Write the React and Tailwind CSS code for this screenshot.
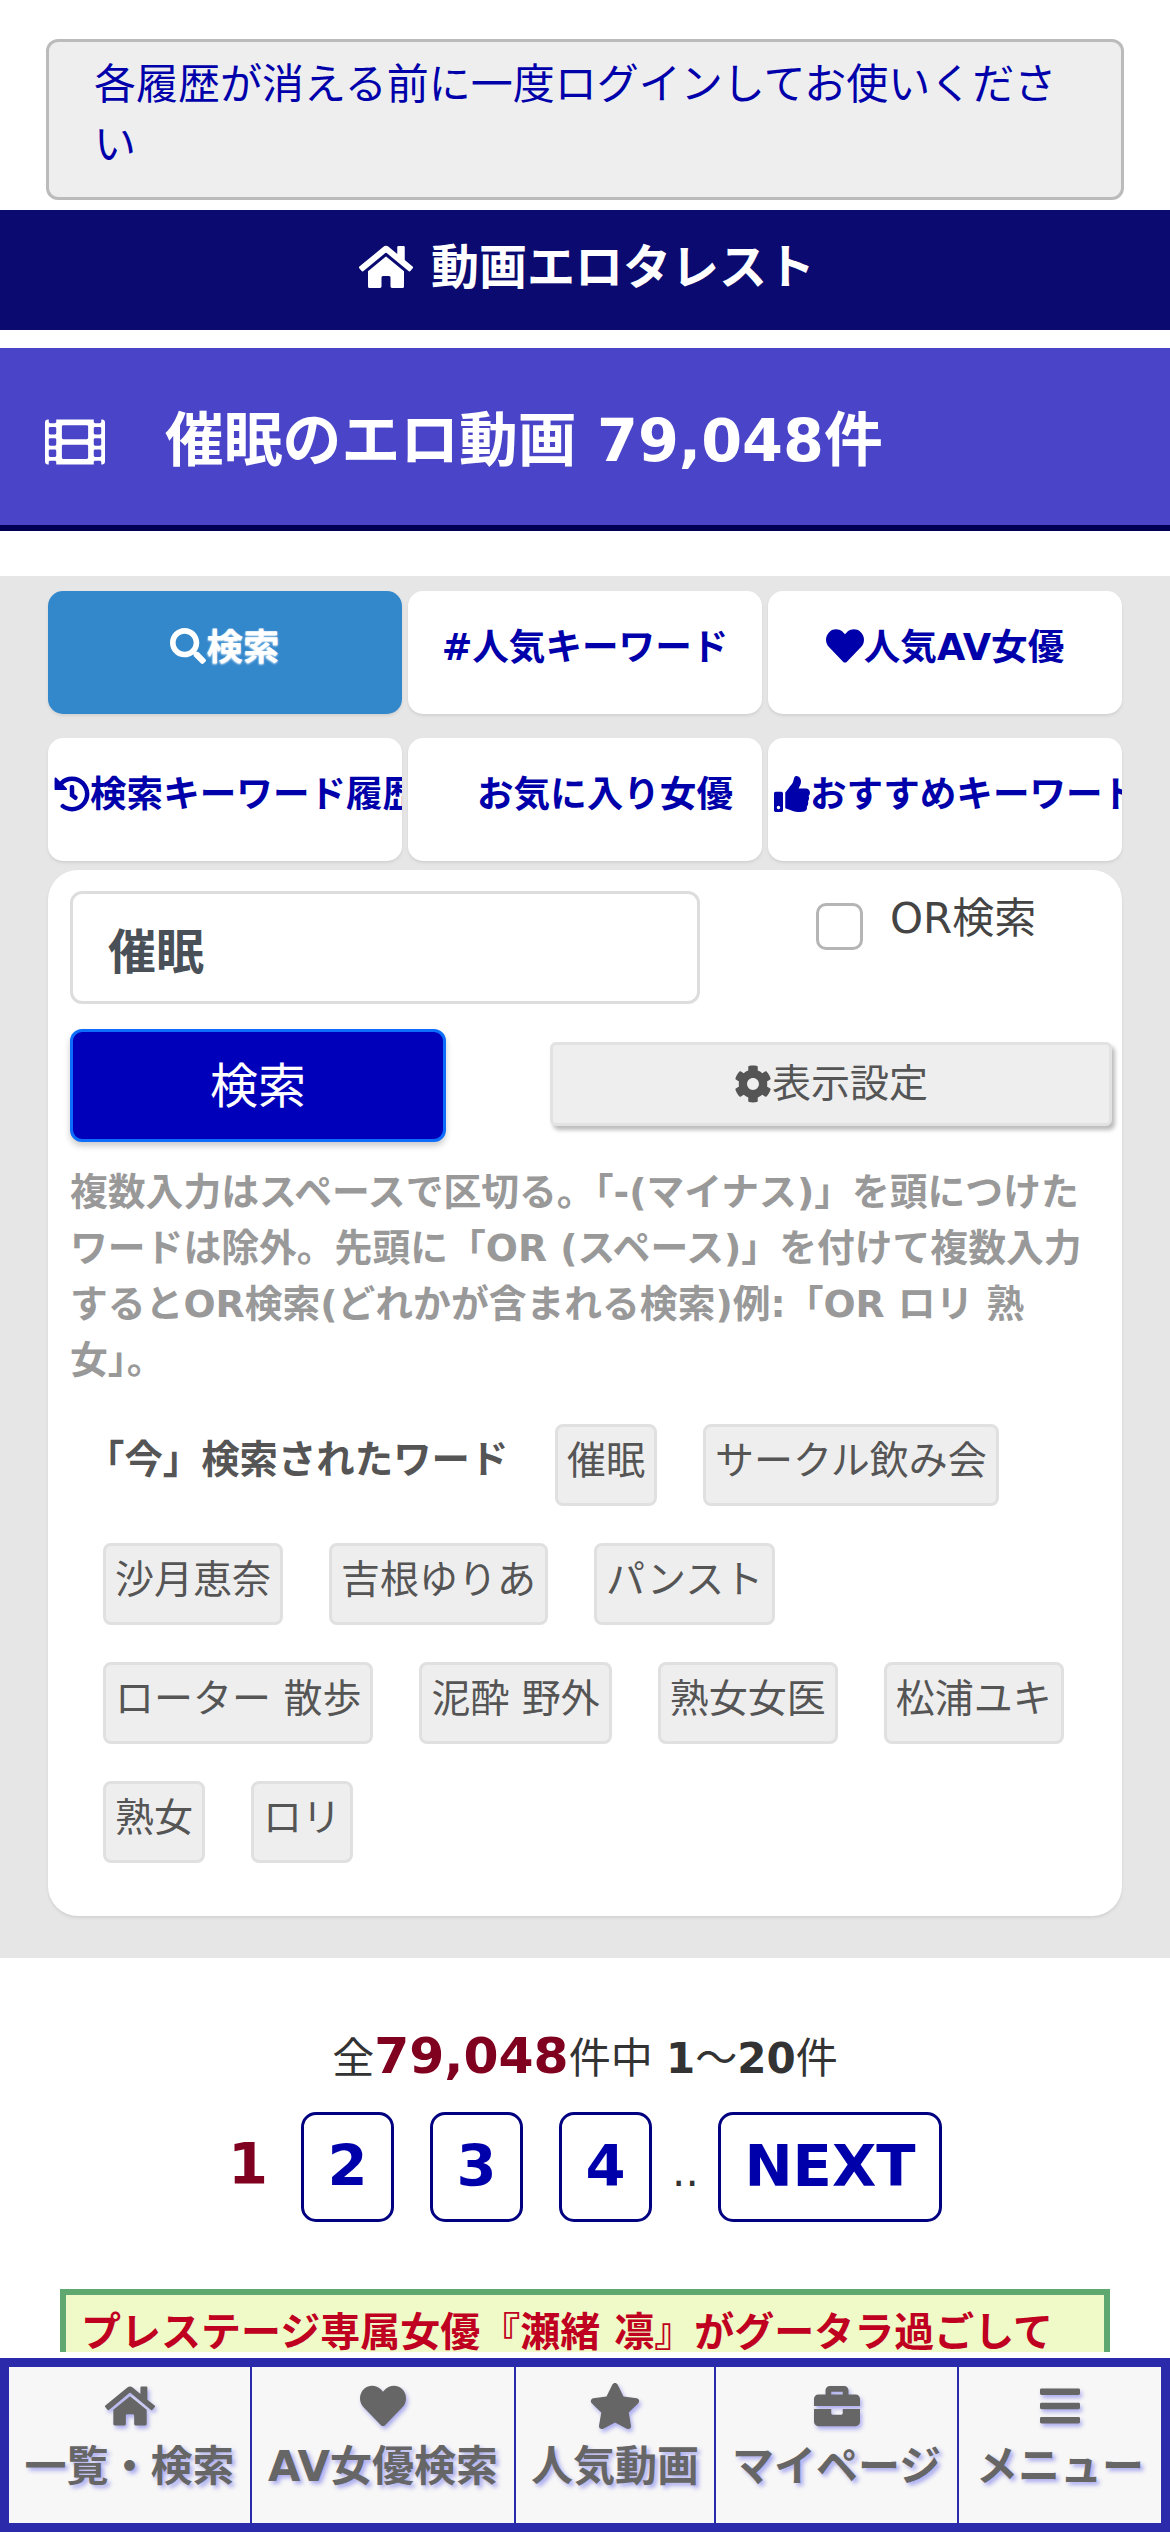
import React from 'react'
import { FaHome, FaFilm, FaSearch, FaHeart, FaHistory, FaThumbsUp, FaCog, FaStar, FaBriefcase, FaBars } from 'react-icons/fa'

const TABS = [
	{ label: '検索', icon: <FaSearch className="inline w-[36px] h-[36px] align-[-4px]" />, active: true },
	{ label: '#人気キーワード' },
	{ label: '人気AV女優', icon: <FaHeart className="inline w-[38px] h-[38px] align-[-5px]" /> },
	{ label: '検索キーワード履歴', icon: <FaHistory className="inline w-[36px] h-[36px] align-[-5px]" /> },
	{ label: 'お気に入り女優', icon: <span className="inline-block w-[40px]" /> },
	{ label: 'おすすめキーワード', icon: <FaThumbsUp className="inline w-[36px] h-[36px] align-[-5px]" /> },
]

const WORDS = ['催眠', 'サークル飲み会', '沙月恵奈', '吉根ゆりあ', 'パンスト', 'ローター 散歩', '泥酔 野外', '熟女女医', '松浦ユキ', '熟女', 'ロリ']

const NAV = [
	{ label: '一覧・検索', icon: <FaHome className="w-[50px] h-[50px]" />, w: 'w-[241px]' },
	{ label: 'AV女優検索', icon: <FaHeart className="w-[46px] h-[46px]" />, w: 'w-[262px]' },
	{ label: '人気動画', icon: <FaStar className="w-[52px] h-[52px]" />, w: 'w-[198px]' },
	{ label: 'マイページ', icon: <FaBriefcase className="w-[46px] h-[46px]" />, w: 'w-[241px]' },
	{ label: 'メニュー', icon: <FaBars className="w-[40px] h-[46px]" />, w: 'flex-1' },
]

const App = () => {
	return (
		<div className="h-[2532px] overflow-hidden bg-white font-['DejaVu_Sans','Noto_Sans_CJK_JP',sans-serif] flex flex-col">
			<div className="h-[2352px] overflow-hidden">

				{/* ALERT */}
				<div className="mt-[39px] mx-[46px] h-[161px] border-[3px] border-[#bbbbbb] rounded-[12px] bg-[#eeeeee] px-[45px] pt-[13px] text-[42px] leading-[60px] text-[#0000aa]">
					各履歴が消える前に一度ログインしてお使いください
				</div>

				{/* SITE HEADER */}
				<div className="mt-[10px] h-[120px] bg-[#0a0a70] pb-[6px] pl-[4px] flex items-center justify-center gap-[18px] text-white text-[48px] font-bold">
					<FaHome className="w-[54px] h-[48px]" />
					<span>動画エロタレスト</span>
				</div>

				{/* TITLE */}
				<div className="mt-[18px] h-[183px] bg-[#4a44c8] border-b-[6px] border-[#000055] pt-[10px] flex items-center pl-[45px] text-white">
					<FaFilm className="w-[60px] h-[60px] shrink-0" />
					<h1 className="ml-[60px] text-[58.8px] font-bold">催眠のエロ動画 79,048件</h1>
				</div>

				{/* SEARCH AREA */}
				<div className="mt-[45px] h-[1382px] bg-[#e6e6e6] px-[48px] pt-[15px]">
					<div className="grid grid-cols-3 gap-x-[6px] gap-y-[24px]">
						{TABS.map(tab => (
							<div
								key={tab.label}
								className={`h-[123px] rounded-[15px] px-[6px] pt-[33px] text-center whitespace-nowrap overflow-hidden text-[36.6px] leading-[48px] font-bold shadow-[0_2px_3px_#d2d2d2] ${tab.active
									? 'bg-[#3388cc] text-white [text-shadow:0_1px_2px_#ffffff]'
									: 'bg-white text-[#0000aa]'
									}`}
							>
								{tab.icon}{tab.label}
							</div>
						))}
					</div>

					<div className="mt-[9px] h-[1046px] bg-white rounded-[30px] px-[22px] pt-[21px] shadow-[0_2px_3px_#d2d2d2]">
						<div className="flex">
							<input
								readOnly
								value="催眠"
								className="w-[630px] h-[113px] shrink-0 border-[3px] border-[#dddddd] rounded-[12px] px-[35px] text-[48px] font-bold text-[#495057] outline-none"
							/>
							<div className="ml-[116px] mt-[12px] w-[47px] h-[47px] shrink-0 border-[3px] border-[#b5b5b5] rounded-[10px]" />
							<span className="ml-[27px] text-[42px] leading-[50px] text-[#444444] h-fit mt-[3px] whitespace-nowrap">OR検索</span>
						</div>

						<div className="mt-[25px] flex items-start">
							<div className="w-[376px] h-[113px] shrink-0 bg-[#0000bb] border-[3px] border-[#0d6efd] rounded-[12px] flex items-center justify-center text-white text-[48px] shadow-[0_4px_6px_#cccccc]">
								検索
							</div>
							<div className="ml-[104px] mt-[13px] w-[562px] h-[84px] shrink-0 bg-[#eeeeee] border-[3px] border-[#e2e2e2] rounded-[6px] flex items-center justify-center text-[39px] text-[#555555] shadow-[3px_4px_4px_#bbbbbb]">
								<FaCog className="w-[38px] h-[38px] text-[#555555]" />
								<span>表示設定</span>
							</div>
						</div>

						<p className="mt-[22px] text-[37.8px] leading-[56px] font-bold text-[#999999]">
							複数入力はスペースで区切る。「-(マイナス)」を頭につけたワードは除外。先頭に「OR (スペース)」を付けて複数入力するとOR検索(どれかが含まれる検索)例:「OR ロリ 熟女」。
						</p>

						<div className="mt-[36px] pl-[33px] pr-[30px] flex flex-wrap gap-x-[46px] gap-y-[37px] items-start">
							<span className="-ml-[17px] w-[423px] h-[82px] text-[38.4px] leading-[72px] font-bold text-[#555555] whitespace-nowrap">「今」検索されたワード</span>
							{WORDS.map(word => (
								<span
									key={word}
									className="h-[82px] px-[9px] border-[3px] border-[#e0e0e0] rounded-[8px] bg-[#eeeeee] text-[39px] leading-[68px] text-[#555555] whitespace-nowrap"
								>
									{word}
								</span>
							))}
						</div>
					</div>
				</div>

				{/* PAGER */}
				<div className="mt-[66px] text-center text-[42px] leading-[63px] text-[#333333]">
					全<b className="text-[50.4px] text-[#800020]">79,048</b>件中 <b>1</b>〜<b>20</b>件
				</div>
				<div className="mt-[22px] flex justify-center items-stretch text-[57.6px] font-bold">
					<span className="h-[110px] leading-[106px] text-[#800020] mr-[33px]">1</span>
					{['2', '3', '4'].map(n => (
						<span key={n} className="h-[110px] w-[93px] border-[3px] border-[#000080] rounded-[15px] text-center leading-[104px] text-[#0000aa] mr-[36px] last-of-type:w-[95px]">{n}</span>
					))}
					<span className="-ml-[16px] w-[46px] self-end pb-[25px] text-[42px] leading-[50px] font-normal text-[#333333]">..</span>
					<span className="h-[110px] w-[224px] border-[3px] border-[#000080] rounded-[15px] text-center leading-[104px] text-[#0000aa]">NEXT</span>
				</div>

				{/* NOTICE */}
				<div className="mt-[67px] mx-[60px] h-[200px] border-[6px] border-[#5fa86f] bg-[#f0f9c8] px-[15px] pt-[7px] text-[40px] leading-[60px] font-bold text-[#c00020] whitespace-nowrap">
					プレステージ専属女優『瀬緒 凛』がグータラ過ごして
				</div>
			</div>

			{/* BOTTOM NAV */}
			<nav className="mt-[6px] h-[174px] bg-[#2a2aaa] px-[9px] pt-[9px] pb-[9px] flex gap-[2px]">
				{NAV.map(item => (
					<div key={item.label} className={`${item.w} bg-[#f7f7f7] flex flex-col items-center text-[#666666]`}>
						<div className="h-[78px] flex items-center [filter:drop-shadow(2px_3px_2px_#aaaaee)]">{item.icon}</div>
						<span className="-mt-[6px] text-[42px] leading-[56px] font-bold whitespace-nowrap [text-shadow:3px_3px_4px_#aaaaee]">{item.label}</span>
					</div>
				))}
			</nav>
		</div>
	)
}

export default App
